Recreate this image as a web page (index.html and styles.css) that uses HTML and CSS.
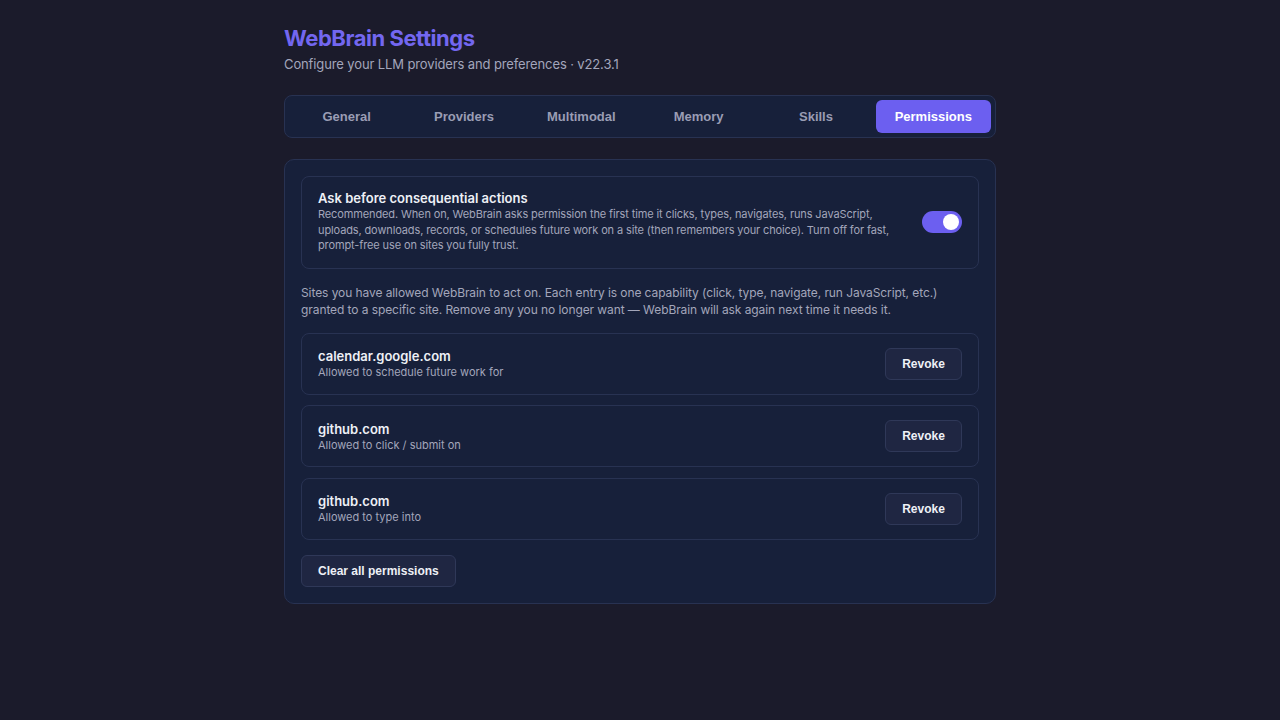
FILE: index.html
```html
<!DOCTYPE html>
<html lang="en">
<head>
  <meta charset="UTF-8">
  <meta name="viewport" content="width=device-width, initial-scale=1.0">
  <title>WebBrain Settings</title>
  <link rel="stylesheet" href="styles.css">
</head>
<body>
  <div class="container">
    <header class="header">
      <h1>WebBrain Settings</h1>
      <p class="subtitle">Configure your LLM providers and preferences · v22.3.1</p>
    </header>

    <nav class="tabs">
      <button class="tab">General</button>
      <button class="tab">Providers</button>
      <button class="tab">Multimodal</button>
      <button class="tab">Memory</button>
      <button class="tab">Skills</button>
      <button class="tab active">Permissions</button>
    </nav>

    <section class="panel">
      <div class="setting-card">
        <div class="setting-text">
          <h3>Ask before consequential actions</h3>
          <p>Recommended. When on, WebBrain asks permission the first time it clicks, types, navigates, runs JavaScript, uploads, downloads, records, or schedules future work on a site (then remembers your choice). Turn off for fast, prompt-free use on sites you fully trust.</p>
        </div>
        <label class="switch">
          <input type="checkbox" checked>
          <span class="slider"></span>
        </label>
      </div>

      <p class="intro">Sites you have allowed WebBrain to act on. Each entry is one capability (click, type, navigate, run JavaScript, etc.) granted to a specific site. Remove any you no longer want — WebBrain will ask again next time it needs it.</p>

      <div id="grants" class="grants"></div>

      <button class="btn" id="clear-all">Clear all permissions</button>
    </section>
  </div>

  <script>
    const grants = [
      { site: 'calendar.google.com', label: 'Allowed to schedule future work for' },
      { site: 'github.com', label: 'Allowed to click / submit on' },
      { site: 'github.com', label: 'Allowed to type into' },
    ];

    const renderGrants = () => {
      const list = document.getElementById('grants');
      list.innerHTML = '';
      grants.forEach((g, i) => {
        const row = document.createElement('div');
        row.className = 'grant';
        row.innerHTML = `
          <div class="grant-info">
            <strong>${g.site}</strong>
            <span>${g.label}</span>
          </div>
          <button class="btn" data-index="${i}">Revoke</button>
        `;
        list.appendChild(row);
      });
    };

    document.getElementById('grants').addEventListener('click', (e) => {
      const idx = e.target.dataset.index;
      if (idx === undefined) return;
      grants.splice(parseInt(idx), 1);
      renderGrants();
    });

    document.getElementById('clear-all').addEventListener('click', () => {
      grants.length = 0;
      renderGrants();
    });

    renderGrants();
  </script>
</body>
</html>
```

FILE: styles.css
```css
* {
  margin: 0;
  padding: 0;
  box-sizing: border-box;
}
body {
  background-color: #1b1b2b;
  color: #e6e8f0;
  font-family: Inter, "Noto Sans", sans-serif;
}
.container {
  width: 712px;
  margin: 0 auto;
  padding-top: 25px;
}
.header h1 {
  font-size: 22px;
  font-weight: 700;
  color: #7367f0;
  letter-spacing: -0.45px;
  line-height: 26px;
}
.subtitle {
  margin-top: 5px;
  font-size: 13px;
  letter-spacing: -0.12px;
  color: #a3a6bb;
}
.tabs {
  display: flex;
  gap: 2px;
  margin-top: 23px;
  padding: 4px;
  background-color: #17203a;
  border: 1px solid #283252;
  border-radius: 8px;
}
.tab {
  flex: 1;
  height: 33px;
  background: none;
  border: none;
  border-radius: 6px;
  font-family: "Liberation Sans", Arial, sans-serif;
  font-size: 13px;
  font-weight: 700;
  color: #9a9db4;
  cursor: pointer;
}
.tab.active {
  background-color: #6c5ff0;
  color: #ffffff;
}
.panel {
  margin-top: 21px;
  padding: 16px 16px 16px;
  background-color: #17203a;
  border: 1px solid #283252;
  border-radius: 10px;
}
.setting-card {
  display: flex;
  align-items: center;
  gap: 30px;
  padding: 13px 16px 14px;
  border: 1px solid #283252;
  border-radius: 8px;
}
.setting-text h3 {
  font-size: 13px;
  font-weight: 600;
  color: #eef0f6;
  line-height: 16px;
}
.setting-text p {
  margin-top: 1px;
  font-size: 11px;
  line-height: 15.5px;
  letter-spacing: -0.12px;
  color: #a3a6bb;
}
.switch {
  position: relative;
  flex-shrink: 0;
  width: 40px;
  height: 22px;
}
.switch input {
  display: none;
}
.slider {
  position: absolute;
  inset: 0;
  background-color: #6c5ff0;
  border-radius: 11px;
  cursor: pointer;
}
.slider::after {
  content: "";
  position: absolute;
  top: 3px;
  right: 3px;
  width: 16px;
  height: 16px;
  background-color: #ffffff;
  border-radius: 50%;
}
.intro {
  margin: 15px 0 15px;
  font-size: 12px;
  line-height: 17px;
  letter-spacing: -0.08px;
  color: #a3a6bb;
}
.grants {
  display: flex;
  flex-direction: column;
  gap: 10.5px;
}
.grant {
  display: flex;
  justify-content: space-between;
  align-items: center;
  height: 62px;
  padding: 0 16px 0 16px;
  border: 1px solid #283252;
  border-radius: 8px;
}
.grant-info strong {
  display: block;
  font-size: 13px;
  font-weight: 600;
  line-height: 16px;
  color: #eef0f6;
}
.grant-info span {
  display: block;
  margin-top: 1px;
  font-size: 11px;
  color: #a3a6bb;
}
.btn {
  height: 32px;
  padding: 0 16px;
  background-color: #1f2642;
  border: 1px solid #2f3858;
  border-radius: 6px;
  font-family: "Liberation Sans", Arial, sans-serif;
  font-size: 12px;
  font-weight: 700;
  color: #eef0f6;
  cursor: pointer;
}
.grant .btn {
  width: 77px;
}
#clear-all {
  margin-top: 15px;
}
```
